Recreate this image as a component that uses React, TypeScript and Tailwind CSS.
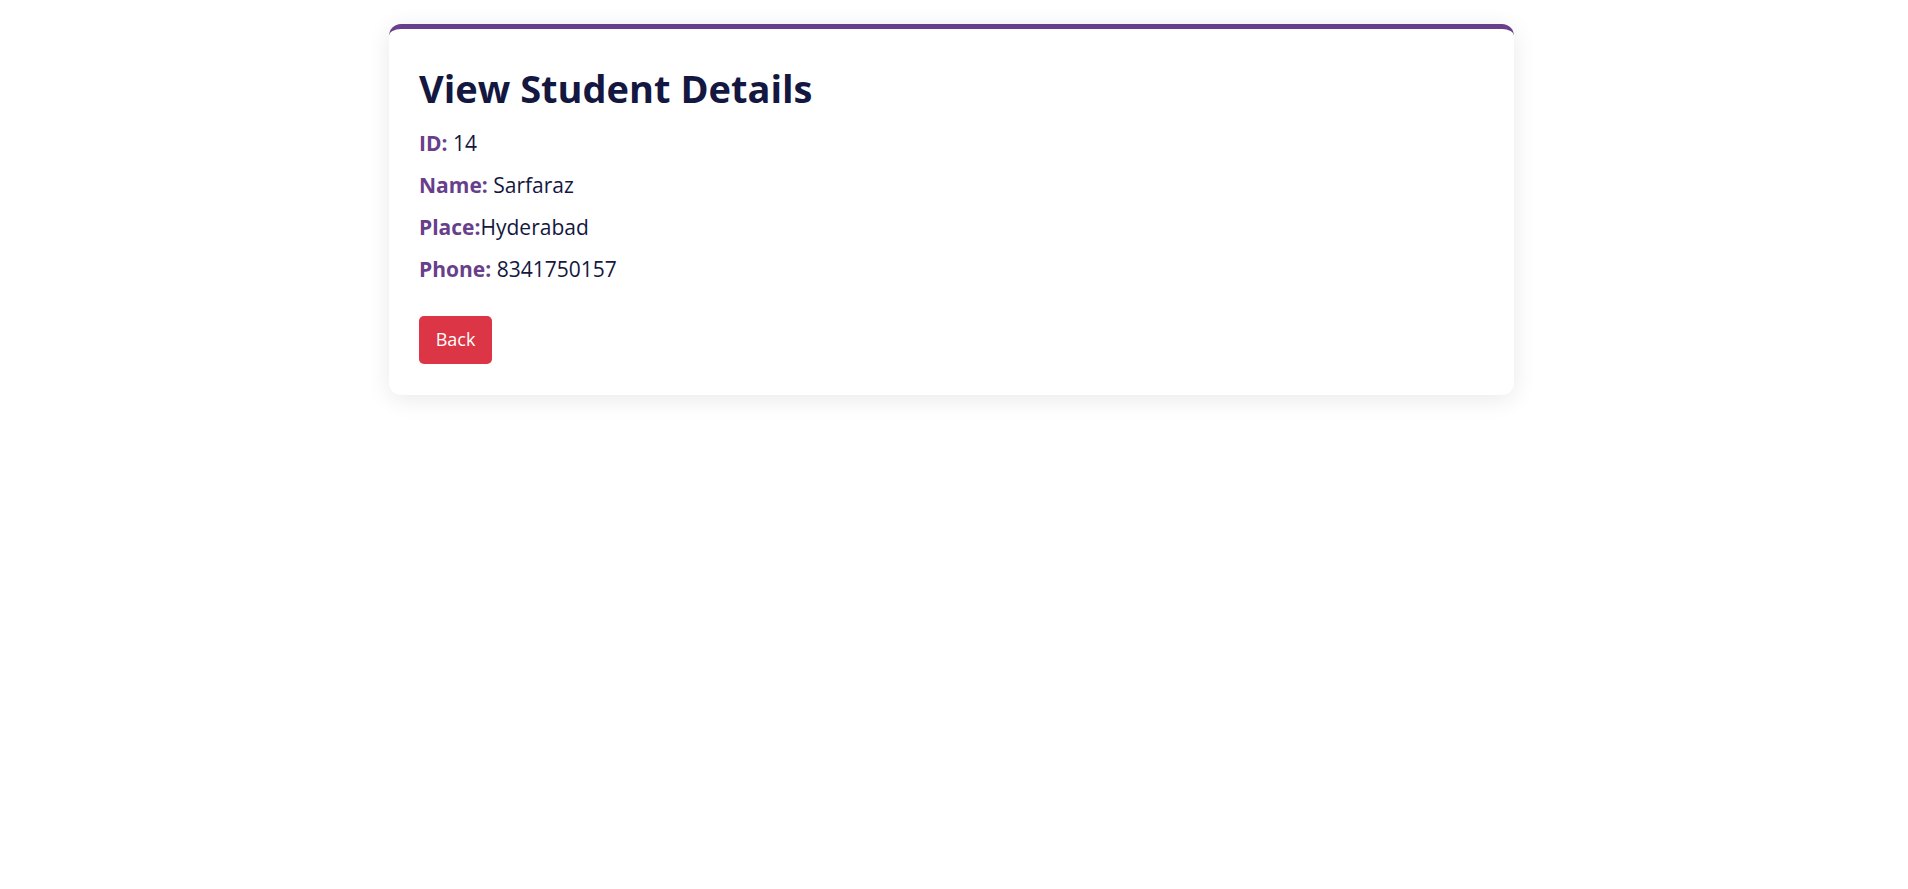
export default function App() {
  return (
    <main className="min-h-screen bg-white pt-[24px] font-['Open_Sans',sans-serif]">
      <div className="ml-[389px] w-[1125px] rounded-xl border-t-[5px] border-[#683f8a] bg-white px-[30px] pt-[37px] pb-[31px] shadow-[0_4px_24px_rgba(0,0,0,0.09)]">
        <h1 className="mb-[10px] text-[38px] font-bold leading-[1.2] text-[#14173f]">View Student Details</h1>
        <p className="text-[21px] leading-[42px] text-[#14173f]">
          <b className="text-[#683f8a]">ID:</b> 14
        </p>
        <p className="text-[21px] leading-[42px] text-[#14173f]">
          <b className="text-[#683f8a]">Name:</b> Sarfaraz
        </p>
        <p className="text-[21px] leading-[42px] text-[#14173f]">
          <b className="text-[#683f8a]">Place:</b>Hyderabad
        </p>
        <p className="text-[21px] leading-[42px] text-[#14173f]">
          <b className="text-[#683f8a]">Phone:</b> 8341750157
        </p>
        <button className="mt-[26px] h-[48px] w-[73px] rounded-[5px] bg-[#dc3545] text-[18px] text-white">
          Back
        </button>
      </div>
    </main>
  )
}
